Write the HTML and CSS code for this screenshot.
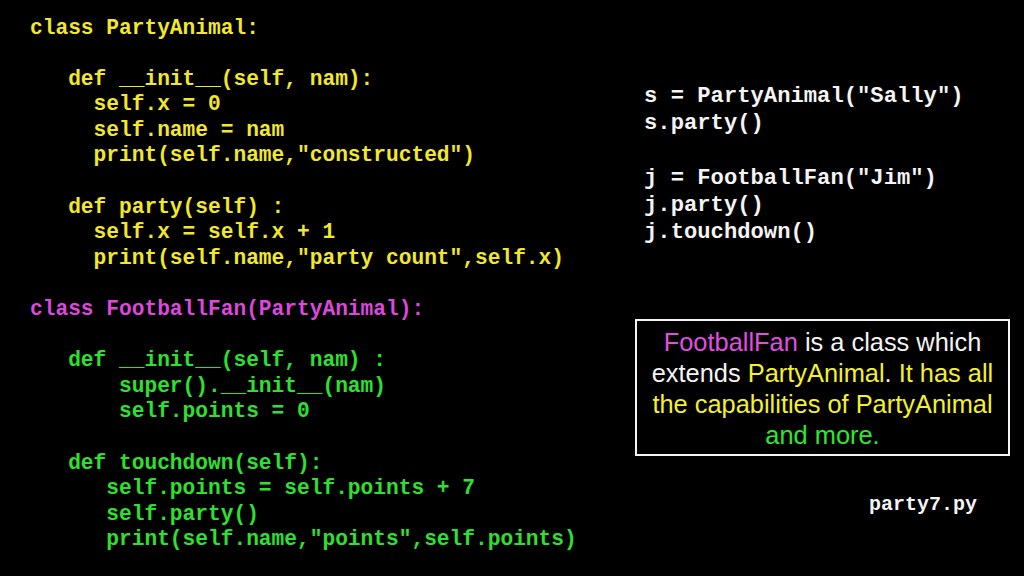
FILE: index.html
```html
<!DOCTYPE html>
<html>
<head>
<meta charset="utf-8">
<link rel="stylesheet" href="styles.css">
</head>
<body>
<div class="slide">
  <pre class="code main-code"><span class="yellow">class PartyAnimal:

   def __init__(self, nam):
     self.x = 0
     self.name = nam
     print(self.name,"constructed")

   def party(self) :
     self.x = self.x + 1
     print(self.name,"party count",self.x)
</span>
<span class="magenta">class FootballFan(PartyAnimal):</span>
<span class="green">
   def __init__(self, nam) :
       super().__init__(nam)
       self.points = 0

   def touchdown(self):
      self.points = self.points + 7
      self.party()
      print(self.name,"points",self.points)</span></pre>
  <div class="side">
    <pre class="code side-code">s = PartyAnimal("Sally")
s.party()

j = FootballFan("Jim")
j.party()
j.touchdown()</pre>
    <div class="note">
      <span class="t-magenta">FootballFan</span> is a class which extends <span class="t-yellow">PartyAnimal</span>. <span class="t-yellow">It has all the capabilities of PartyAnimal</span> <span class="t-green">and more.</span>
    </div>
    <div class="filename">party7.py</div>
  </div>
</div>
</body>
</html>
```
FILE: styles.css
```css
html, body {
  margin: 0;
  padding: 0;
  background: #000;
}
.slide {
  width: 1024px;
  height: 576px;
  background: #000;
  display: flex;
  overflow: hidden;
}
.code {
  margin: 0;
  font-family: "Liberation Mono", "Courier New", monospace;
  font-weight: bold;
  white-space: pre;
}
.main-code {
  flex: 0 0 635px;
  box-sizing: border-box;
  padding: 15.5px 0 0 30px;
  font-size: 21.2px;
  line-height: 25.6px;
}
.yellow { color: #f2e82a; }
.magenta { color: #dc48dc; }
.green { color: #2ee030; }
.side {
  flex: 0 0 375px;
  display: flex;
  flex-direction: column;
  padding-top: 83px;
}
.side-code {
  color: #f4f4f4;
  font-size: 22.2px;
  line-height: 27.3px;
  padding-left: 9px;
}
.note {
  margin-top: 72px;
  border: 2px solid #f4f4f4;
  padding: 6px 6px 3px;
  font-family: "Liberation Sans", Arial, sans-serif;
  font-size: 25.4px;
  line-height: 31px;
  color: #f4f4f4;
  text-align: center;
}
.t-magenta { color: #e04ee0; }
.t-yellow { color: #f4f02e; }
.t-green { color: #2ee82e; }
.filename {
  align-self: flex-end;
  margin: 39px 33px 0 0;
  font-family: "Liberation Mono", "Courier New", monospace;
  font-weight: bold;
  font-size: 20px;
  line-height: 20px;
  color: #f4f4f4;
}
```
